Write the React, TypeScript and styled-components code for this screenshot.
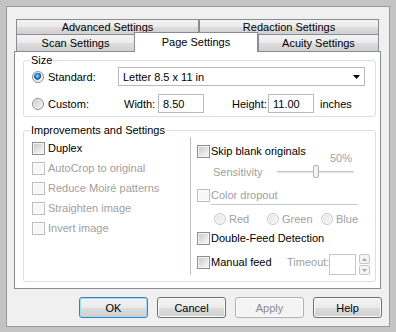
import React from 'react';
import styled, { createGlobalStyle, css } from 'styled-components';

const GlobalStyle = createGlobalStyle`
  html, body { margin: 0; padding: 0; background: #c4c4c4; }
  body { font-family: "Liberation Sans", Arial, sans-serif; font-size: 11px; color: #000; }
  * { box-sizing: border-box; }
`;

const Frame = styled.div`
  width: 396px;
  height: 332px;
  padding: 6px 6px 5px 6px;
  background: #c4c4c4;
`;

const Dialog = styled.div`
  height: 100%;
  border: 1px solid #9a9a9a;
  background: #f0f0f0;
  padding: 12px 8px 8px 7px;
  display: flex;
  flex-direction: column;
`;

const TabRow = styled.div<{ $h: number }>`
  display: flex;
  align-items: flex-start;
  margin: 0 2px;
  height: ${(p) => p.$h}px;
  flex: none;
`;

const tabGradient = css`
  background: linear-gradient(#f3f3f3, #ebebeb 50%, #dddddd 50%, #d0d0d0);
`;

const Tab = styled.div<{ $w?: number; $h: number }>`
  ${(p) => (p.$w ? `width: ${p.$w}px; flex: none;` : 'flex: 1;')}
  height: ${(p) => p.$h}px;
  display: flex;
  align-items: center;
  justify-content: center;
  border: 1px solid #898c95;
  border-bottom: none;
  ${tabGradient}
  line-height: 13px;
`;

const ActiveTab = styled.div`
  position: relative;
  z-index: 2;
  width: 124px;
  height: 20px;
  margin: -2px 0 0 -1px;
  flex: none;
  display: flex;
  align-items: center;
  justify-content: center;
  border: 1px solid #898c95;
  border-bottom: none;
  background: #fff;
  line-height: 13px;
`;

const Panel = styled.div`
  height: 238px;
  flex: none;
  border: 1px solid #898c95;
  background: #fff;
  padding: 2px 4px 0 8px;
  display: flex;
  flex-direction: column;
  gap: 7px;
`;

const Group = styled.fieldset<{ $pb: number; $pl: number }>`
  margin: 0;
  min-width: 0;
  border: 1px solid #d5dfe5;
  border-radius: 3px;
  padding: 0 0 ${(p) => p.$pb}px ${(p) => p.$pl}px;
`;

const Legend = styled.legend`
  padding: 0 1px;
  margin-left: -2px;
  line-height: 13px;
`;

const GroupBody = styled.div`
  display: flex;
  flex-direction: column;
  gap: 8px;
`;

const OptionRow = styled.div`
  display: flex;
  align-items: center;
  height: 19px;
`;

const Radio = styled.span<{ $checked?: boolean; $disabled?: boolean }>`
  width: 12px;
  height: 12px;
  flex: none;
  border-radius: 50%;
  border: 1px solid ${(p) => (p.$disabled ? '#c6c6c6' : '#8e8f8f')};
  box-shadow: inset 0 0 0 1px ${(p) => (p.$disabled ? '#fbfbfb' : '#f4f4f4')};
  background: ${(p) =>
    p.$disabled
      ? 'linear-gradient(135deg, #e4e4e4, #f8f8f8)'
      : p.$checked
      ? 'radial-gradient(circle at 45% 40%, #a9e0ff 0, #3d8de0 1.8px, #1a5ca8 3px, #3a6f9f 3.6px, transparent 3.8px), linear-gradient(135deg, #c9c9c9, #f7f7f7)'
      : 'linear-gradient(135deg, #c9c9c9, #f8f8f8)'};
`;

const OptLabel = styled.span`
  width: 70px;
  margin-left: 4px;
  flex: none;
`;

const Select = styled.div`
  width: 247px;
  height: 19px;
  flex: none;
  border: 1px solid #b7bbc0;
  background: #fff;
  display: flex;
  align-items: center;
  justify-content: space-between;
  padding: 0 4px 0 4px;
`;

const FieldLabel = styled.span<{ $w?: number; $ml: number }>`
  ${(p) => (p.$w ? `width: ${p.$w}px;` : '')}
  margin-left: ${(p) => p.$ml}px;
  flex: none;
`;

const TextBox = styled.div`
  width: 46px;
  height: 19px;
  flex: none;
  border: 1px solid #b7bbc0;
  background: #fff;
  padding-left: 4px;
  display: flex;
  align-items: center;
`;

const Columns = styled.div`
  display: flex;
  align-items: flex-start;
`;

const LeftCol = styled.div`
  width: 158px;
  flex: none;
  padding-top: 1px;
  display: flex;
  flex-direction: column;
`;

const RightCol = styled.div`
  flex: 1;
  border-left: 1px solid #b9bfc4;
  padding: 6px 0 0 6px;
  display: flex;
  flex-direction: column;
`;

const CheckRow = styled.div<{ $gap: number; $h: number; $mt?: number; $disabled?: boolean; $w?: number }>`
  display: flex;
  align-items: center;
  gap: ${(p) => p.$gap}px;
  height: ${(p) => p.$h}px;
  margin-top: ${(p) => p.$mt ?? 0}px;
  color: ${(p) => (p.$disabled ? '#a0a0a0' : '#000')};
  ${(p) => (p.$w ? `width: ${p.$w}px; flex: none;` : '')}
`;

const Check = styled.span<{ $disabled?: boolean }>`
  width: 13px;
  height: 13px;
  flex: none;
  border: 1px solid ${(p) => (p.$disabled ? '#bcbcbc' : '#8e8f8f')};
  box-shadow: inset 0 0 0 1px ${(p) => (p.$disabled ? '#fdfdfd' : '#f4f4f4')};
  background: ${(p) =>
    p.$disabled ? '#f7f7f7' : 'linear-gradient(135deg, #c6c6c6, #ececec 70%, #f6f6f6)'};
`;

const SliderBlock = styled.div`
  margin: -7px 0 0 16px;
  display: grid;
  grid-template-columns: 64px 77px;
  grid-template-rows: 12px 16px;
  align-items: center;
  color: #a0a0a0;
`;

const Percent = styled.span`
  grid-column: 2;
  justify-self: end;
  padding-right: 2px;
  line-height: 12px;
`;

const Track = styled.div`
  position: relative;
  height: 3px;
  border-top: 1px solid #c7c7c7;
  border-bottom: 1px solid #fafafa;
  background: #e7e7e7;
`;

const Thumb = styled.span`
  position: absolute;
  left: 36px;
  top: -7px;
  width: 6px;
  height: 13px;
  border: 1px solid #b3b3b3;
  border-radius: 2px;
  background: linear-gradient(90deg, #f9f9f9, #ececec);
`;

const Separator = styled.div`
  height: 1px;
  margin: 1px 17px 0 14px;
  background: #c9c9c9;
`;

const RadioRow = styled.div`
  display: flex;
  align-items: center;
  height: 14px;
  margin-top: 7px;
  padding-left: 17px;
  color: #a0a0a0;
`;

const RadioItem = styled.div<{ $w?: number }>`
  display: flex;
  align-items: center;
  gap: 3px;
  ${(p) => (p.$w ? `width: ${p.$w}px;` : '')}
`;

const ManualRow = styled.div`
  display: flex;
  align-items: flex-start;
  margin-top: 8px;
  height: 21px;
`;

const Muted = styled.span<{ $mr: number }>`
  color: #a0a0a0;
  line-height: 16px;
  margin-right: ${(p) => p.$mr}px;
  width: 36px;
  flex: none;
`;

const SmallBox = styled.div`
  width: 27px;
  height: 21px;
  border: 1px solid #c4c7ca;
  background: #fff;
  flex: none;
`;

const Spin = styled.div`
  display: flex;
  flex-direction: column;
  gap: 1px;
  margin-left: 3px;
`;

const SpinButton = styled.div`
  width: 11px;
  height: 10px;
  border: 1px solid #c6c6c6;
  border-radius: 2px;
  background: #f3f3f3;
  display: flex;
  align-items: center;
  justify-content: center;
`;

const ButtonBar = styled.div`
  display: flex;
  justify-content: flex-end;
  gap: 9px;
  margin: 8px -1px 0 0;
`;

const Button = styled.button<{ $default?: boolean; $disabled?: boolean }>`
  width: 69px;
  height: 21px;
  padding: 0;
  font-family: inherit;
  font-size: 11px;
  color: ${(p) => (p.$disabled ? '#8a8a8a' : '#000')};
  border-radius: 3px;
  border: 1px solid ${(p) => (p.$default ? '#3c7fb1' : p.$disabled ? '#adb2b5' : '#707070')};
  box-shadow: inset 0 0 0 1px ${(p) => (p.$default ? '#a8dcf5' : '#fbfbfb')};
  background: ${(p) =>
    p.$disabled ? '#f4f4f4' : 'linear-gradient(#f3f3f3, #ebebeb 50%, #dddddd 50%, #d0d0d0)'};
`;

export default function App() {
  return (
    <>
      <GlobalStyle />
      <Frame>
        <Dialog>
          <TabRow $h={15}>
            <Tab $w={183} $h={15}>Advanced Settings</Tab>
            <Tab $h={15}>Redaction Settings</Tab>
          </TabRow>
          <TabRow $h={17}>
            <Tab $w={119} $h={17}>Scan Settings</Tab>
            <ActiveTab>Page Settings</ActiveTab>
            <Tab $h={17}>Acuity Settings</Tab>
          </TabRow>
          <Panel>
            <Group $pb={3} $pl={8}>
              <Legend>Size</Legend>
              <GroupBody>
                <OptionRow>
                  <Radio $checked />
                  <OptLabel>Standard:</OptLabel>
                  <Select>
                    <span>Letter 8.5 x 11 in</span>
                    <svg width="7" height="4" viewBox="0 0 7 4">
                      <polygon points="0,0 7,0 3.5,4" fill="#000" />
                    </svg>
                  </Select>
                </OptionRow>
                <OptionRow>
                  <Radio />
                  <OptLabel>Custom:</OptLabel>
                  <FieldLabel $w={34} $ml={6}>Width:</FieldLabel>
                  <TextBox>8.50</TextBox>
                  <FieldLabel $w={36} $ml={28}>Height:</FieldLabel>
                  <TextBox>11.00</TextBox>
                  <FieldLabel $ml={6}>inches</FieldLabel>
                </OptionRow>
              </GroupBody>
            </Group>
            <Group $pb={6} $pl={8}>
              <Legend>Improvements and Settings</Legend>
              <Columns>
                <LeftCol>
                  <CheckRow $gap={3} $h={20}>
                    <Check />
                    Duplex
                  </CheckRow>
                  <CheckRow $gap={3} $h={20} $disabled>
                    <Check $disabled />
                    AutoCrop to original
                  </CheckRow>
                  <CheckRow $gap={3} $h={20} $disabled>
                    <Check $disabled />
                    Reduce Moiré patterns
                  </CheckRow>
                  <CheckRow $gap={3} $h={20} $disabled>
                    <Check $disabled />
                    Straighten image
                  </CheckRow>
                  <CheckRow $gap={3} $h={20} $disabled>
                    <Check $disabled />
                    Invert image
                  </CheckRow>
                </LeftCol>
                <RightCol>
                  <CheckRow $gap={1} $h={16}>
                    <Check />
                    Skip blank originals
                  </CheckRow>
                  <SliderBlock>
                    <Percent>50%</Percent>
                    <span>Sensitivity</span>
                    <Track>
                      <Thumb />
                    </Track>
                  </SliderBlock>
                  <CheckRow $gap={1} $h={16} $mt={7} $disabled>
                    <Check $disabled />
                    Color dropout
                  </CheckRow>
                  <Separator />
                  <RadioRow>
                    <RadioItem $w={53}>
                      <Radio $disabled />
                      Red
                    </RadioItem>
                    <RadioItem $w={54}>
                      <Radio $disabled />
                      Green
                    </RadioItem>
                    <RadioItem>
                      <Radio $disabled />
                      Blue
                    </RadioItem>
                  </RadioRow>
                  <CheckRow $gap={1} $h={16} $mt={4}>
                    <Check />
                    Double-Feed Detection
                  </CheckRow>
                  <ManualRow>
                    <CheckRow $gap={1} $h={16} $w={90}>
                      <Check />
                      Manual feed
                    </CheckRow>
                    <Muted $mr={6}>Timeout:</Muted>
                    <SmallBox />
                    <Spin>
                      <SpinButton>
                        <svg width="5" height="3" viewBox="0 0 5 3">
                          <polygon points="0,3 5,3 2.5,0" fill="#a6a6a6" />
                        </svg>
                      </SpinButton>
                      <SpinButton>
                        <svg width="5" height="3" viewBox="0 0 5 3">
                          <polygon points="0,0 5,0 2.5,3" fill="#a6a6a6" />
                        </svg>
                      </SpinButton>
                    </Spin>
                  </ManualRow>
                </RightCol>
              </Columns>
            </Group>
          </Panel>
          <ButtonBar>
            <Button $default>OK</Button>
            <Button>Cancel</Button>
            <Button $disabled>Apply</Button>
            <Button>Help</Button>
          </ButtonBar>
        </Dialog>
      </Frame>
    </>
  );
}
